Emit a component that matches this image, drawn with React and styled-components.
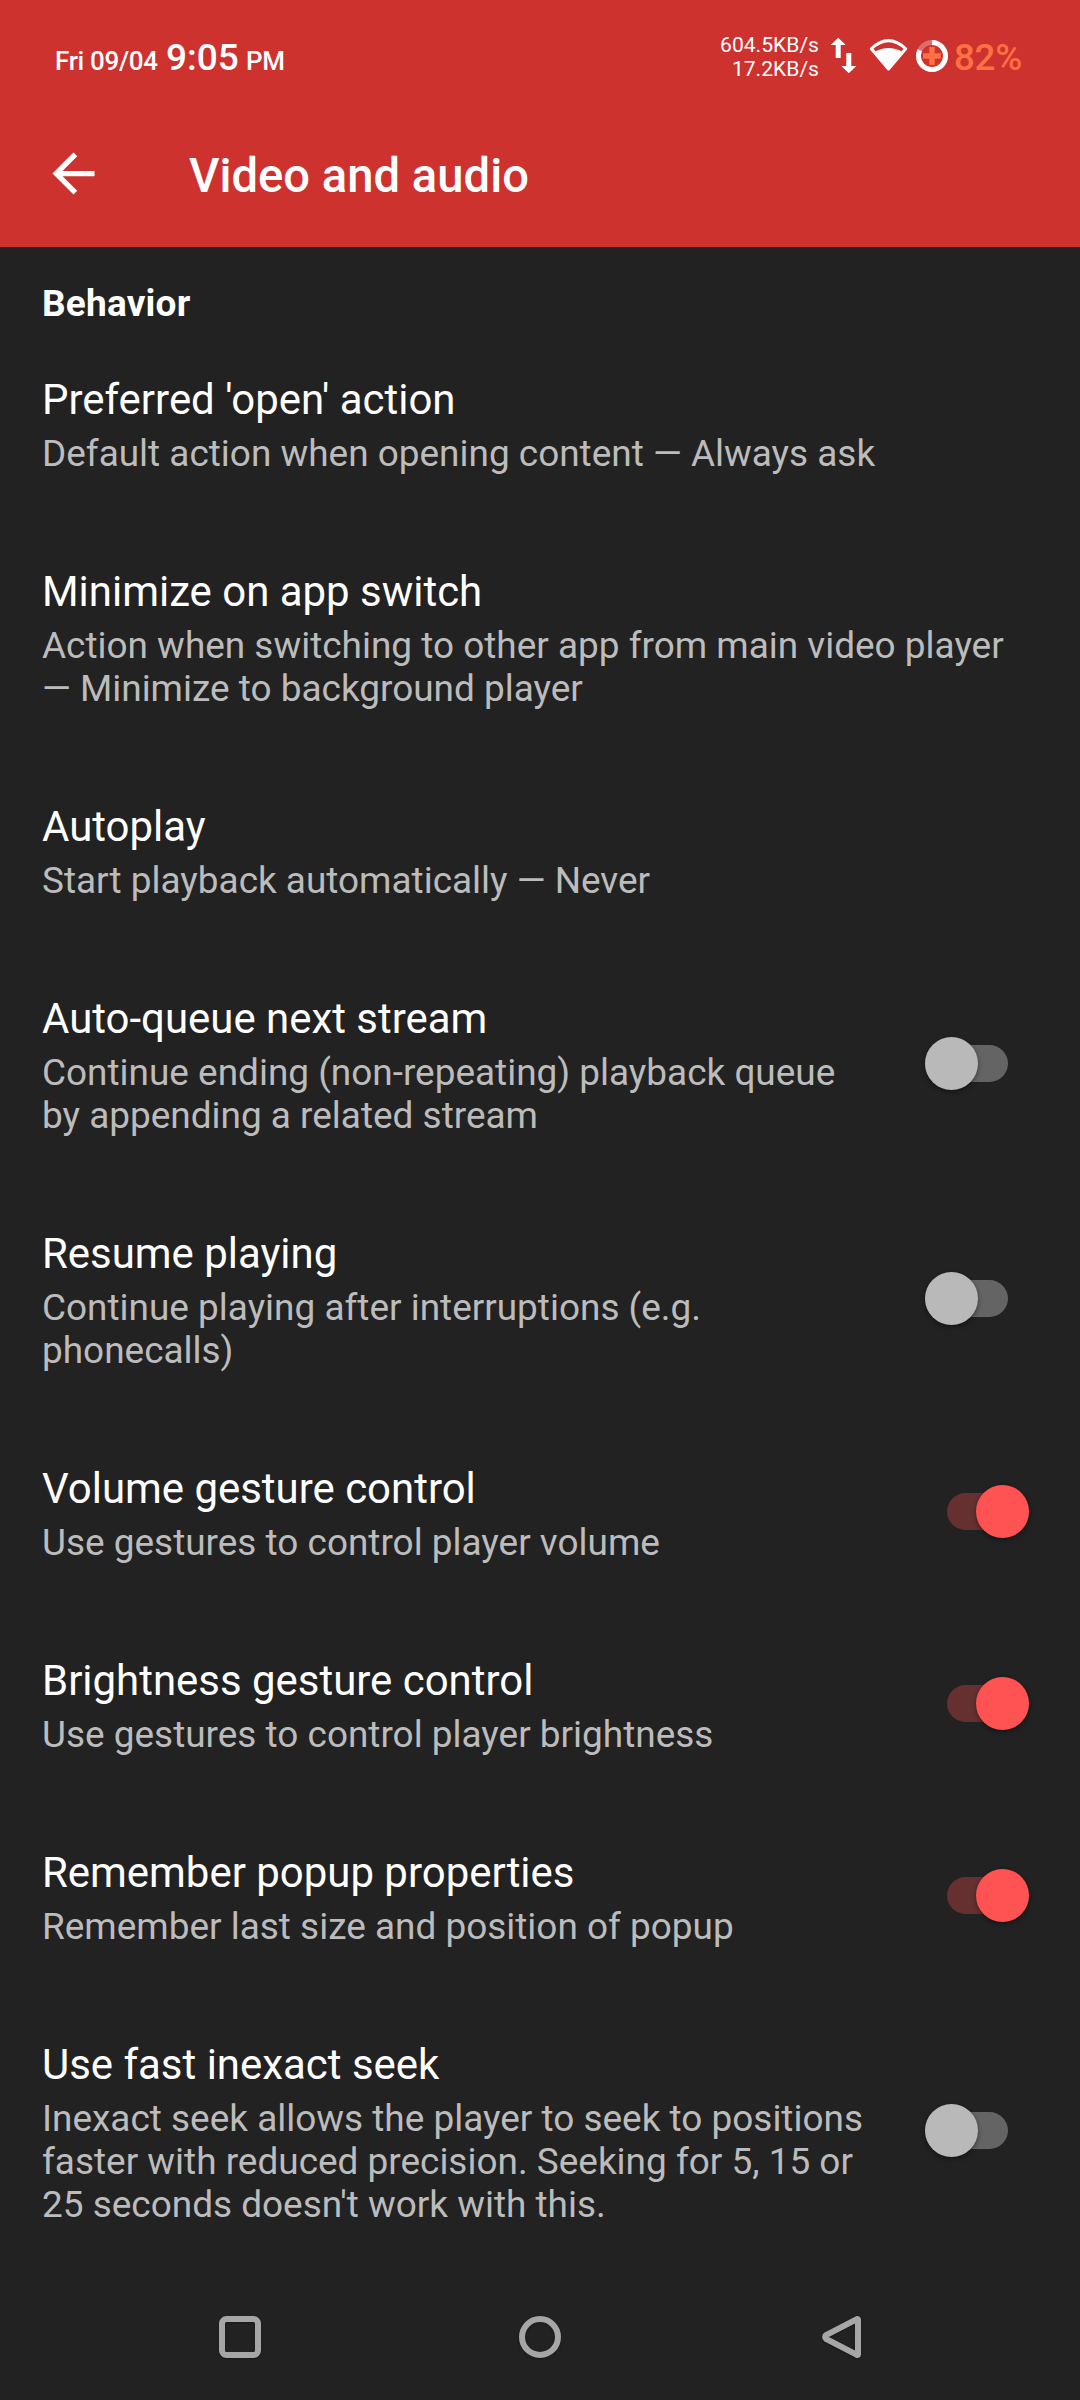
import React from "react";
import styled, { createGlobalStyle } from "styled-components";

const GlobalStyle = createGlobalStyle`
  * { box-sizing: border-box; }
  body { margin: 0; background: #222222; font-family: Roboto, "Liberation Sans", sans-serif; }
`;

const Screen = styled.div`
  width: 1080px;
  height: 2400px;
  display: flex;
  flex-direction: column;
  background: #222222;
  color: #ffffff;
  overflow: hidden;
`;

const Header = styled.header`
  height: 247px;
  flex: none;
  background: #cd322f;
`;

const StatusBar = styled.div`
  height: 100px;
  padding: 0 58px 0 55px;
  display: flex;
  justify-content: space-between;
`;

const Clock = styled.div`
  padding-top: 36px;
  font-size: 26px;
  line-height: 43px;
  font-weight: 500;
  letter-spacing: -0.3px;
  white-space: pre;
`;

const Time = styled.span`
  margin: 0 1px 0 2px;
  font-size: 37px;
  letter-spacing: 0;
`;

const StatusIcons = styled.div`
  display: flex;
  align-items: flex-start;
`;

const Rates = styled.div`
  padding-top: 33px;
  margin-right: 11px;
  font-size: 21.1px;
  line-height: 24px;
  text-align: right;
`;

const StatusGlyphs = styled.svg`
  display: block;
  width: 124px;
  height: 50px;
  margin-top: 30px;
`;

const Battery = styled.div`
  width: 68px;
  padding-top: 36px;
  font-size: 36.75px;
  line-height: 43px;
  font-weight: 500;
  letter-spacing: -0.3px;
  color: #ff7043;
  white-space: nowrap;
`;

const Toolbar = styled.div`
  height: 147px;
  padding-left: 42px;
  display: flex;
  align-items: center;
`;

const BackIcon = styled.svg`
  width: 63px;
  height: 63px;
  fill: #ffffff;
`;

const PageTitle = styled.h1`
  margin: 4px 0 0 84px;
  font-size: 47.2px;
  line-height: 56px;
  font-weight: 500;
`;

const Settings = styled.main`
  flex: 1;
`;

const Category = styled.h2`
  margin: 0;
  height: 80px;
  padding: 35px 42px 0;
  font-size: 37px;
  line-height: 43px;
  font-weight: 700;
  letter-spacing: 0.2px;
`;

const Row = styled.section`
  display: flex;
  align-items: center;
  padding: 48px 48px 44px 42px;
`;

const Texts = styled.div`
  flex: 1;
  min-width: 0;
`;

const Title = styled.div`
  font-size: 41.95px;
  line-height: 49px;
`;

const Summary = styled.div`
  margin-top: 8px;
  font-size: 36.95px;
  line-height: 43px;
  color: #bcbcbc;
`;

const SwitchCell = styled.div`
  width: 155px;
  height: 54px;
  margin: -2px 0 2px;
  padding-right: ${(p) => (p.$on ? 3 : 24)}px;
  display: flex;
  justify-content: flex-end;
`;

const Track = styled.div`
  width: ${(p) => (p.$on ? 82.5 : 83)}px;
  height: 37px;
  margin-top: 8px;
  border-radius: 19px;
  background: ${(p) => (p.$on ? "#663031" : "#646464")};
  display: flex;
  justify-content: ${(p) => (p.$on ? "flex-end" : "flex-start")};
`;

const Thumb = styled.div`
  width: 53px;
  height: 53px;
  margin-top: -8px;
  border-radius: 50%;
  background: ${(p) => (p.$on ? "#ff5252" : "#b9b9b9")};
  box-shadow: 0 2px 5px rgba(0, 0, 0, 0.4);
`;

const NavBar = styled.nav`
  height: 126px;
  flex: none;
  display: flex;
  align-items: center;
  justify-content: space-between;
  padding: 0 210px;
`;

const NavIcon = styled.svg`
  width: 60px;
  height: 60px;
  fill: none;
  stroke: #a6a6a6;
  stroke-width: 6;
  stroke-linejoin: round;
  filter: drop-shadow(0 1px 1px rgba(0, 0, 0, 0.3));
`;

function Switch({ on }) {
  return (
    <SwitchCell $on={on}>
      <Track $on={on}>
        <Thumb $on={on} />
      </Track>
    </SwitchCell>
  );
}

const items = [
  { title: "Preferred 'open' action", summary: "Default action when opening content — Always ask" },
  {
    title: "Minimize on app switch",
    summary: "Action when switching to other app from main video player — Minimize to background player",
  },
  { title: "Autoplay", summary: "Start playback automatically — Never" },
  {
    title: "Auto-queue next stream",
    summary: "Continue ending (non-repeating) playback queue by appending a related stream",
    on: false,
  },
  { title: "Resume playing", summary: "Continue playing after interruptions (e.g. phonecalls)", on: false },
  { title: "Volume gesture control", summary: "Use gestures to control player volume", on: true },
  { title: "Brightness gesture control", summary: "Use gestures to control player brightness", on: true },
  { title: "Remember popup properties", summary: "Remember last size and position of popup", on: true },
  {
    title: "Use fast inexact seek",
    summary:
      "Inexact seek allows the player to seek to positions faster with reduced precision. Seeking for 5, 15 or 25 seconds doesn't work with this.",
    on: false,
  },
];

export default function App() {
  return (
    <Screen>
      <GlobalStyle />
      <Header>
        <StatusBar>
          <Clock>
            Fri 09/04 <Time>9:05</Time> PM
          </Clock>
          <StatusIcons>
            <Rates>
              <div>604.5KB/s</div>
              <div>17.2KB/s</div>
            </Rates>
            <StatusGlyphs viewBox="830 30 124 50">
              <path fill="#fff" d="M838.2 37.7l7.5 7.3h-5v13h-5V45h-5z" />
              <path fill="#fff" d="M848.8 73.3l7.5-7.3h-5V53h-5v13h-5z" />
              <path
                fill="none"
                stroke="#fff"
                strokeWidth="3"
                strokeLinejoin="round"
                d="M871.3 48.8Q888.5 32.6 905.7 48.8L888.5 69z"
              />
              <path fill="#fff" d="M874.5 52Q888.5 44 902.5 52L888.5 69z" />
              <circle cx="932" cy="56" r="13.5" fill="none" stroke="#fff" strokeOpacity="0.3" strokeWidth="5" />
              <circle
                cx="932"
                cy="56"
                r="13.5"
                fill="none"
                stroke="#fff"
                strokeWidth="5"
                pathLength="100"
                strokeDasharray="82 18"
                transform="rotate(-90 932 56)"
              />
              <path fill="#ff7043" d="M929.3 47h5.4v6.3h6.3v5.4h-6.3V65h-5.4v-6.3H923v-5.4h6.3z" />
            </StatusGlyphs>
            <Battery>82%</Battery>
          </StatusIcons>
        </StatusBar>
        <Toolbar>
          <BackIcon viewBox="0 0 24 24">
            <path d="M20 11H7.83l5.59-5.59L12 4l-8 8 8 8 1.41-1.41L7.83 13H20v-2z" />
          </BackIcon>
          <PageTitle>Video and audio</PageTitle>
        </Toolbar>
      </Header>
      <Settings>
        <Category>Behavior</Category>
        {items.map((item) => (
          <Row key={item.title}>
            <Texts>
              <Title>{item.title}</Title>
              <Summary>{item.summary}</Summary>
            </Texts>
            {item.on !== undefined && <Switch on={item.on} />}
          </Row>
        ))}
      </Settings>
      <NavBar>
        <NavIcon viewBox="0 0 60 60">
          <rect x="12" y="12" width="36" height="36" rx="4.5" />
        </NavIcon>
        <NavIcon viewBox="0 0 60 60">
          <circle cx="30" cy="30" r="18" />
        </NavIcon>
        <NavIcon viewBox="0 0 60 60">
          <path d="M48 12.5v35a.6.6 0 0 1-1 .4L16 31.8a2.3 2.3 0 0 1 0-3.6L47 12.1a.6.6 0 0 1 1 .4z" />
        </NavIcon>
      </NavBar>
    </Screen>
  );
}
